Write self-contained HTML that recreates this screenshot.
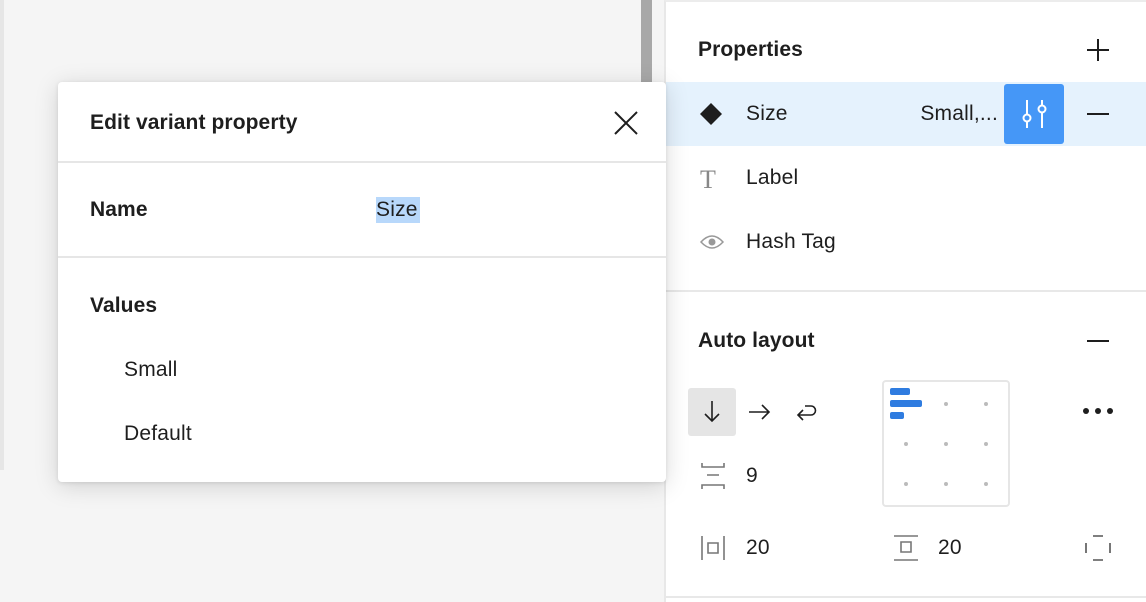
<!DOCTYPE html>
<html><head><style>
*{margin:0;padding:0;box-sizing:border-box}
body{width:1146px;height:602px;overflow:hidden;background:#f5f5f5;font-family:"Liberation Sans",sans-serif;color:#1e1e1e;position:relative}
.a{position:absolute}
.t{font-size:21px;position:absolute;line-height:24px;letter-spacing:0.2px;white-space:nowrap}
.b{font-weight:bold;letter-spacing:0.1px}
</style></head><body>
<div class="a" style="left:0;top:0;width:4px;height:470px;background:#e6e6e6"></div>
<div class="a" style="left:641px;top:0;width:11px;height:82px;background:#a8a8a8"></div>
<div class="a" style="left:664px;top:0;width:482px;height:602px;background:#fff;border-left:2px solid #e8e8e8;border-top:2px solid #ececec"></div>
<div class="t b" style="left:698px;top:38px">Properties</div>
<svg class="a" style="left:1086px;top:38px" width="24" height="24"><path d="M12 1v22M1 12h22" stroke="#1e1e1e" stroke-width="2"/></svg>
<div class="a" style="left:666px;top:82px;width:480px;height:64px;background:#e5f2fd"></div>
<svg class="a" style="left:700px;top:103px" width="22" height="22"><path d="M11 0L22 11 11 22 0 11z" fill="#1e1e1e"/></svg>
<div class="t" style="left:746px;top:102px">Size</div>
<div class="t" style="right:148px;top:102px">Small,...</div>
<div class="a" style="left:1004px;top:84px;width:60px;height:60px;background:#4597f7;border-radius:3px"></div>
<svg class="a" style="left:1004px;top:84px" width="60" height="60"><g stroke="#fff" stroke-width="2" fill="#4597f7"><path d="M23 16v28M38 16v28"/><circle cx="23" cy="34" r="3.5"/><circle cx="38" cy="25" r="3.5"/></g></svg>
<svg class="a" style="left:1086px;top:112px" width="24" height="4"><path d="M1 2h22" stroke="#1e1e1e" stroke-width="2"/></svg>
<div class="a" style="left:700px;top:168px;font-family:'Liberation Serif',serif;font-size:26px;color:#888;line-height:24px">T</div>
<div class="t" style="left:746px;top:166px">Label</div>
<svg class="a" style="left:700px;top:234px" width="24" height="16"><path d="M1 8Q12-4 23 8Q12 20 1 8z" fill="none" stroke="#999" stroke-width="1.5"/><circle cx="12" cy="8" r="3.5" fill="#999"/></svg>
<div class="t" style="left:746px;top:230px">Hash Tag</div>
<div class="a" style="left:666px;top:290px;width:480px;height:2px;background:#e8e8e8"></div>
<div class="t b" style="left:698px;top:329px">Auto layout</div>
<svg class="a" style="left:1086px;top:339px" width="24" height="4"><path d="M1 2h22" stroke="#1e1e1e" stroke-width="2"/></svg>
<div class="a" style="left:688px;top:388px;width:48px;height:48px;background:#e5e5e5;border-radius:3px"></div>
<svg class="a" style="left:700px;top:400px" width="24" height="24"><path d="M12 1v20M5 14l7 7 7-7" fill="none" stroke="#1e1e1e" stroke-width="1.6"/></svg>
<svg class="a" style="left:748px;top:400px" width="24" height="24"><path d="M1 12h20M14 5l7 7-7 7" fill="none" stroke="#1e1e1e" stroke-width="1.6"/></svg>
<svg class="a" style="left:796px;top:400px" width="24" height="24"><path d="M9 6h6a4.5 4.5 0 0 1 0 9H2M7 10l-5 5 5 5" fill="none" stroke="#1e1e1e" stroke-width="1.6"/></svg>
<div class="a" style="left:882px;top:380px;width:128px;height:127px;border:2px solid #e6e6e6;border-radius:4px;background:#fff"></div>
<svg class="a" style="left:882px;top:380px" width="128" height="127"><g fill="#2f7ce0"><rect x="8" y="8" width="20" height="7" rx="2"/><rect x="8" y="20" width="32" height="7" rx="2"/><rect x="8" y="32" width="14" height="7" rx="2"/></g><g fill="#bbb"><circle cx="64" cy="24" r="2"/><circle cx="104" cy="24" r="2"/><circle cx="24" cy="64" r="2"/><circle cx="64" cy="64" r="2"/><circle cx="104" cy="64" r="2"/><circle cx="24" cy="104" r="2"/><circle cx="64" cy="104" r="2"/><circle cx="104" cy="104" r="2"/></g></svg>
<svg class="a" style="left:1082px;top:404px" width="32" height="12"><g fill="#1e1e1e"><circle cx="4" cy="7" r="3"/><circle cx="16" cy="7" r="3"/><circle cx="28" cy="7" r="3"/></g></svg>
<svg class="a" style="left:700px;top:462px" width="26" height="28"><path d="M2 1v4h22V1M7 13h12M2 27v-4h22v4" fill="none" stroke="#777" stroke-width="1.6"/></svg>
<div class="t" style="left:746px;top:464px">9</div>
<svg class="a" style="left:700px;top:535px" width="26" height="26"><path d="M2 1v24M24 1v24M8 8h10v10H8z" fill="none" stroke="#777" stroke-width="1.6"/></svg>
<div class="t" style="left:746px;top:536px">20</div>
<svg class="a" style="left:893px;top:535px" width="26" height="26"><path d="M1 1h24M1 25h24M8 7h10v10H8z" fill="none" stroke="#777" stroke-width="1.6"/></svg>
<div class="t" style="left:938px;top:536px">20</div>
<svg class="a" style="left:1085px;top:535px" width="26" height="26"><path d="M8 1h10M8 25h10M1 8v10M25 8v10" fill="none" stroke="#555" stroke-width="1.6"/></svg>
<div class="a" style="left:666px;top:596px;width:480px;height:2px;background:#e8e8e8"></div>
<div class="a" style="left:58px;top:82px;width:608px;height:400px;background:#fff;border-radius:4px;box-shadow:0 4px 24px rgba(0,0,0,.15),0 1px 4px rgba(0,0,0,.1)"></div>
<div class="t b" style="left:90px;top:111px">Edit variant property</div>
<svg class="a" style="left:613px;top:110px" width="26" height="26"><path d="M2 2l22 22M24 2L2 24" stroke="#1e1e1e" stroke-width="2"/></svg>
<div class="a" style="left:58px;top:161px;width:608px;height:2px;background:#e6e6e6"></div>
<div class="t b" style="left:90px;top:198px">Name</div>
<div class="a" style="left:376px;top:197px;width:44px;height:26px;background:#b8d8fb"></div>
<div class="t" style="left:376px;top:198px">Size</div>
<div class="a" style="left:58px;top:256px;width:608px;height:2px;background:#e6e6e6"></div>
<div class="t b" style="left:90px;top:294px">Values</div>
<div class="t" style="left:124px;top:358px">Small</div>
<div class="t" style="left:124px;top:422px">Default</div>
</body></html>
